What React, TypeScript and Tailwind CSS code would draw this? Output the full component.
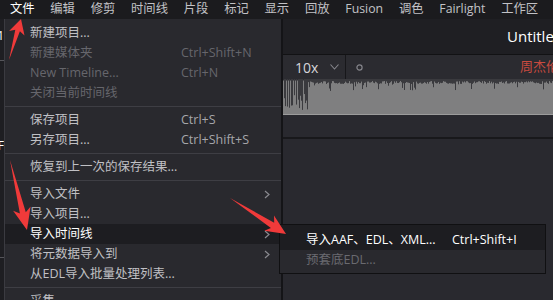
import React from 'react';

type Item =
  | { sep: true }
  | { label: string; shortcut?: string; disabled?: boolean; sub?: boolean; active?: boolean };

const items: Item[] = [
  { label: '新建项目...' },
  { label: '新建媒体夹', shortcut: 'Ctrl+Shift+N', disabled: true },
  { label: 'New Timeline...', shortcut: 'Ctrl+N', disabled: true },
  { label: '关闭当前时间线', disabled: true },
  { sep: true },
  { label: '保存项目', shortcut: 'Ctrl+S' },
  { label: '另存项目...', shortcut: 'Ctrl+Shift+S' },
  { sep: true },
  { label: '恢复到上一次的保存结果...' },
  { sep: true },
  { label: '导入文件', sub: true },
  { label: '导入项目...' },
  { label: '导入时间线', sub: true, active: true },
  { label: '将元数据导入到', sub: true },
  { label: '从EDL导入批量处理列表...' },
  { sep: true },
  { label: '采集' },
];

const topMenu = ['文件', '编辑', '修剪', '时间线', '片段', '标记', '显示', '回放', 'Fusion', '调色', 'Fairlight', '工作区'];

const font = { fontFamily: "'Open Sans','Noto Sans CJK SC',sans-serif" };

function Chevron() {
  return (
    <svg width="6" height="9" viewBox="0 0 6 9" className="shrink-0">
      <polyline points="1,1 5,4.5 1,8" fill="none" stroke="#8a8a90" strokeWidth="1.2" />
    </svg>
  );
}

// red annotation arrow from tail to tip
function arrowPoints(tx: number, ty: number, px: number, py: number, headLen: number, headW: number, shaftW: number) {
  const dx = px - tx;
  const dy = py - ty;
  const len = Math.hypot(dx, dy);
  const ux = dx / len;
  const uy = dy / len;
  const nx = -uy;
  const ny = ux;
  const bx = px - ux * headLen;
  const by = py - uy * headLen;
  const jx = px - ux * headLen * 0.8;
  const jy = py - uy * headLen * 0.8;
  const pts = [
    [tx, ty],
    [jx + nx * shaftW, jy + ny * shaftW],
    [bx + nx * headW, by + ny * headW],
    [px, py],
    [bx - nx * headW, by - ny * headW],
    [jx - nx * shaftW, jy - ny * shaftW],
  ];
  return pts.map((p) => p.map((v) => v.toFixed(1)).join(',')).join(' ');
}

function Waveform() {
  let seed = 7;
  const rnd = () => {
    seed = (seed * 16807) % 2147483647;
    return seed / 2147483647;
  };
  const lines: React.ReactNode[] = [];
  for (let x = 0; x < 272; x++) {
    let h: number;
    if (x < 25) h = 14 + rnd() * 18;
    else h = 2 + rnd() * 3 + (rnd() > 0.88 ? rnd() * 8 : 0);
    if (x < 25 && rnd() > 0.6) continue;
    lines.push(<line key={x} x1={x + 0.5} y1={0} x2={x + 0.5} y2={h} stroke="#3a3a3e" strokeWidth="1" />);
  }
  return (
    <svg width="272" height="36" viewBox="0 0 272 36" className="block">
      <rect width="272" height="36" fill="#7f7f80" />
      <rect x="0" y="0" width="272" height="1.5" fill="#2e2e33" />
      {lines}
      <rect x="0" y="35" width="272" height="1" fill="#9c9c9c" />
    </svg>
  );
}

export default function App() {
  return (
    <div className="relative w-[553px] h-[300px] overflow-hidden bg-[#28282d] flex flex-col" style={font}>
      {/* top menu bar */}
      <div className="h-[19px] bg-[#1b1b1e] flex items-center pl-[2px] shrink-0 overflow-hidden">
        {topMenu.map((m, i) => (
          <span
            key={m}
            className={`px-[7.9px] shrink-0 whitespace-nowrap text-[12.3px] leading-none ${i === 0 ? 'text-white' : 'text-[#c2c2c6]'}`}
          >
            {m}
          </span>
        ))}
      </div>

      <div className="flex flex-1 min-h-0">
        {/* sliver of the underlying panel */}
        <div className="w-[4px] bg-[#1e1e22] relative overflow-hidden shrink-0">
          <span className="absolute top-[11px] right-0 text-[12px] text-white leading-none">1</span>
          <span className="absolute top-[121px] right-0 text-[12px] text-white leading-none">F</span>
          <div className="absolute top-[41px] left-0 w-full h-px bg-[#55555a]" />
          <div className="absolute top-[238px] left-0 w-full h-px bg-[#55555a]" />
        </div>

        {/* file dropdown */}
        <div className="w-[277px] bg-[#29292e] border-l border-[#3b3b41] pt-[4px] shrink-0">
          {items.map((it, i) =>
            'sep' in it ? (
              <div key={i} className="h-[7px] flex items-center">
                <div className="w-full h-px bg-[#3e3e44]" />
              </div>
            ) : (
              <div
                key={i}
                className={`h-5 flex items-center pl-[25px] pr-[11px] text-[12.5px] ${it.active ? 'bg-[#1d1d21] text-white' : it.disabled ? 'text-[#66666c]' : 'text-[#c0c0c4]'}`}
              >
                <span className="w-[151px] whitespace-nowrap">{it.label}</span>
                {it.shortcut && (
                  <span className={`whitespace-nowrap ${it.disabled ? 'text-[#66666c]' : 'text-[#a6a6aa]'}`}>{it.shortcut}</span>
                )}
                {it.sub && (
                  <span className="ml-auto">
                    <Chevron />
                  </span>
                )}
              </div>
            )
          )}
        </div>

        {/* right panel */}
        <div className="flex-1 flex flex-col border-l-2 border-[#141417] min-w-0 overflow-hidden">
          <div className="h-[36px] bg-[#1f1f23] border-b border-[#121214] flex items-center pl-[224px] shrink-0">
            <span className="text-[15px] font-medium text-white whitespace-nowrap">Untitled Project</span>
          </div>
          <div className="h-[24px] bg-[#2b2b30] flex items-center shrink-0 overflow-hidden">
            <div className="w-[63px] h-full flex items-center pl-[12px] border-r border-[#17171a] shrink-0">
              <span className="text-[14px] text-[#d6d6da]">10x</span>
              <svg width="9" height="6" viewBox="0 0 9 6" className="ml-auto mr-[6px]">
                <polyline points="0.5,0.5 4.5,5 8.5,0.5" fill="none" stroke="#86868c" strokeWidth="1.1" />
              </svg>
            </div>
            <svg width="7" height="7" viewBox="0 0 7 7" className="ml-[10px] shrink-0">
              <circle cx="3.5" cy="3.5" r="2.6" fill="none" stroke="#85858b" strokeWidth="1.2" />
            </svg>
            <span className="ml-[157px] shrink-0 text-[13px] text-[#c84a3f] whitespace-nowrap">周杰伦 - 晴天</span>
          </div>
          <div className="h-[36px] shrink-0 overflow-hidden">
            <Waveform />
          </div>
          <div className="h-[24px] bg-[#29292f] border-b-2 border-[#18181b] shrink-0" />
          <div className="flex-1 bg-[#29292f]" />
        </div>
      </div>

      {/* submenu */}
      <div className="absolute left-[279px] top-[224px] w-[267px] bg-[#29292e] border border-[#101012] pb-[3px] text-[12.5px]">
        <div className="h-[25px] pt-[6px] flex items-center bg-[#1d1d21] pl-[26px] text-white whitespace-nowrap">
          <span className="w-[146px]">导入AAF、EDL、XML...</span>
          <span>Ctrl+Shift+I</span>
        </div>
        <div className="h-5 flex items-center pl-[26px] text-[#6a6a70]">预套底EDL...</div>
      </div>

      {/* annotation arrows */}
      <svg className="absolute inset-0 pointer-events-none" width="553" height="300" viewBox="0 0 553 300">
        <polygon points={arrowPoints(9, 60, 21, 19, 15, 8, 2.4)} fill="#f03a3a" />
        <polygon points={arrowPoints(10, 160, 27, 230, 22, 9, 3)} fill="#f03a3a" />
        <polygon points={arrowPoints(230, 198, 286, 234, 20, 9, 3)} fill="#f03a3a" />
      </svg>
    </div>
  );
}
